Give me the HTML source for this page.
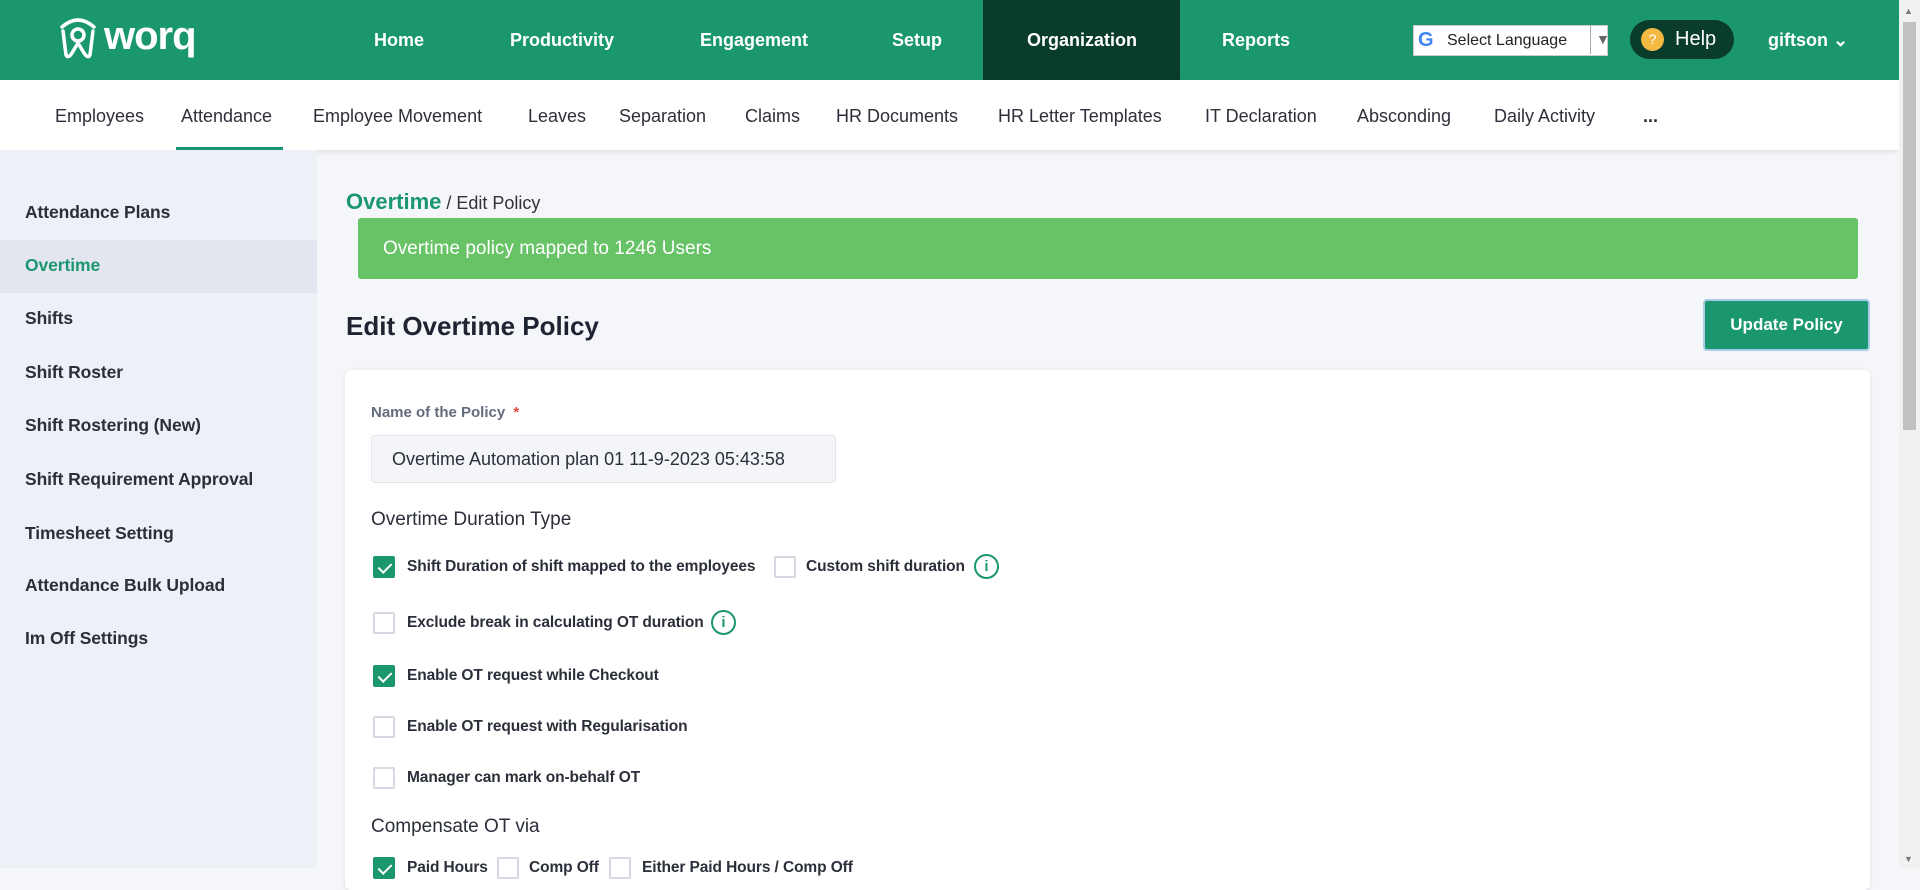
<!DOCTYPE html>
<html><head><meta charset="utf-8">
<style>
*{margin:0;padding:0;box-sizing:border-box}
body{width:1920px;height:868px;overflow:hidden;font-family:"Liberation Sans",sans-serif;background:#f5f6fa;position:relative;color:#2b2f3a}
.top{position:absolute;left:0;top:0;width:1899px;height:80px;background:#1b976f}
.nav{position:absolute;top:0;height:80px;line-height:80px;color:#fff;font-weight:bold;font-size:18px;transform:translateX(-50%);white-space:nowrap}
.org{position:absolute;left:983px;top:0;width:197px;height:80px;background:#0a3c2b}
.lang{position:absolute;left:1413px;top:25px;width:195px;height:31px;background:#fff;border:1px solid #ccc;font-size:16px;color:#222;line-height:29px}
.help{position:absolute;left:1630px;top:20px;width:104px;height:39px;border-radius:20px;background:#0a3c2b;color:#fff;font-size:20px;line-height:39px}
.sub{position:absolute;left:0;top:80px;width:1899px;height:70px;background:#fff;box-shadow:0 2px 5px rgba(0,0,0,.08)}
.si{position:absolute;top:0;line-height:72px;font-size:18px;color:#2d2f3a;white-space:nowrap}
.side{position:absolute;left:0;top:150px;width:317px;height:718px;background:#eef0f7}
.sd{position:absolute;left:25px;font-size:17.5px;font-weight:bold;color:#2b2f3a;letter-spacing:-.1px}
.scroll{position:absolute;right:0;top:0;width:21px;height:868px;background:#f1f1f1}
.card{position:absolute;left:345px;top:370px;width:1525px;height:520px;background:#fff;border-radius:6px;box-shadow:0 1px 4px rgba(0,0,0,.1)}
.cb{position:absolute;width:22px;height:22px;border:2px solid #d6d9e3;border-radius:2px;background:#fff}
.cb.on{background:#1b976f;border-color:#1b976f}
.cb.on:after{content:"";position:absolute;left:6px;top:2px;width:6px;height:11px;border:solid #fff;border-width:0 2px 2px 0;transform:rotate(45deg)}
.lb{position:absolute;font-size:15.5px;font-weight:bold;color:#2b2f3a;letter-spacing:-.1px}
.info{position:absolute;width:25px;height:25px;border:2px solid #1b976f;border-radius:50%;color:#1b976f;font-size:15px;text-align:center;line-height:21px;font-weight:bold}
</style></head><body>
<div class="top">
 <svg style="position:absolute;left:58px;top:15px" width="40" height="46" viewBox="0 0 40 46" fill="none" stroke="#fff" stroke-width="3.5" stroke-linecap="round">
  <path d="M4 12 Q20 -2 36 12"/><path d="M5 16 L8 40 Q10 44 14 38 L20 28 L26 38 Q30 44 32 40 L35 16"/><circle cx="20" cy="20" r="6"/>
 </svg>
 <div style="position:absolute;left:104px;top:14px;color:#fff;font-size:40px;font-weight:bold;letter-spacing:-1px">worq</div>
 <div class="org"></div>
 <div class="nav" style="left:399px">Home</div>
 <div class="nav" style="left:562px">Productivity</div>
 <div class="nav" style="left:754px">Engagement</div>
 <div class="nav" style="left:917px">Setup</div>
 <div class="nav" style="left:1082px">Organization</div>
 <div class="nav" style="left:1256px">Reports</div>
 <div class="lang"><span style="position:absolute;left:4px;top:0;font-weight:bold;font-size:20px;color:#4285f4">G</span><span style="position:absolute;left:33px">Select Language</span><span style="position:absolute;left:176px;top:-1px;border-left:1px solid #aaa;padding-left:5px;color:#666;font-size:14px">▼</span></div>
 <div class="help"><span style="position:absolute;left:11px;top:8px;width:23px;height:23px;border-radius:50%;background:#f4b942;color:#fff;font-size:14px;line-height:23px;text-align:center">?</span><span style="position:absolute;left:45px">Help</span></div>
 <div class="nav" style="left:1808px">giftson ⌄</div>
</div>
<div class="sub">
 <div class="si" style="left:55px">Employees</div>
 <div class="si" style="left:181px">Attendance</div>
 <div class="si" style="left:313px">Employee Movement</div>
 <div class="si" style="left:528px">Leaves</div>
 <div class="si" style="left:619px">Separation</div>
 <div class="si" style="left:745px">Claims</div>
 <div class="si" style="left:836px">HR Documents</div>
 <div class="si" style="left:998px">HR Letter Templates</div>
 <div class="si" style="left:1205px">IT Declaration</div>
 <div class="si" style="left:1357px">Absconding</div>
 <div class="si" style="left:1494px">Daily Activity</div>
 <div class="si" style="left:1643px;font-weight:bold">...</div>
 <div style="position:absolute;left:176px;top:67px;width:107px;height:5px;background:#1b976f"></div>
</div>
<div class="side">
 <div style="position:absolute;left:0;top:90px;width:317px;height:53px;background:#e3e6ef"></div>
 <div class="sd" style="top:52px">Attendance Plans</div>
 <div class="sd" style="top:105px;color:#1b976f">Overtime</div>
 <div class="sd" style="top:158px">Shifts</div>
 <div class="sd" style="top:212px">Shift Roster</div>
 <div class="sd" style="top:265px">Shift Rostering (New)</div>
 <div class="sd" style="top:319px">Shift Requirement Approval</div>
 <div class="sd" style="top:373px">Timesheet Setting</div>
 <div class="sd" style="top:425px">Attendance Bulk Upload</div>
 <div class="sd" style="top:478px">Im Off Settings</div>
</div>
<div style="position:absolute;left:346px;top:189px;white-space:nowrap"><span style="color:#1b976f;font-size:22px;font-weight:bold">Overtime</span><span style="font-size:18px;color:#333"> / Edit Policy</span></div>
<div style="position:absolute;left:358px;top:218px;width:1500px;height:61px;background:#68c266;border-radius:3px;color:#fff;font-size:19px;line-height:61px;padding-left:25px">Overtime policy mapped to 1246 Users</div>
<div style="position:absolute;left:346px;top:311px;font-size:26px;font-weight:bold;color:#1f2433">Edit Overtime Policy</div>
<div style="position:absolute;left:1703px;top:299px;width:167px;height:52px;background:#1b976f;border:2px solid #a9cde8;border-radius:4px;color:#fff;font-size:17px;font-weight:bold;text-align:center;line-height:48px">Update Policy</div>
<div class="card">
 <div style="position:absolute;left:26px;top:34px;font-size:15px;font-weight:bold;color:#646b7d">Name of the Policy <span style="color:#e2463f;margin-left:4px">*</span></div>
 <div style="position:absolute;left:26px;top:65px;width:465px;height:48px;background:#f4f5f9;border:1px solid #e3e5ec;border-radius:4px;font-size:18px;line-height:46px;padding-left:20px;color:#2b2f3a">Overtime Automation plan 01 11-9-2023 05:43:58</div>
 <div style="position:absolute;left:26px;top:139px;font-size:19px;color:#2b2f3a">Overtime Duration Type</div>
 <div class="cb on" style="left:28px;top:186px"></div><div class="lb" style="left:62px;top:188px">Shift Duration of shift mapped to the employees</div>
 <div class="cb" style="left:429px;top:186px"></div><div class="lb" style="left:461px;top:188px">Custom shift duration</div>
 <div class="info" style="left:629px;top:184px">i</div>
 <div class="cb" style="left:28px;top:242px"></div><div class="lb" style="left:62px;top:244px">Exclude break in calculating OT duration</div>
 <div class="info" style="left:366px;top:240px">i</div>
 <div class="cb on" style="left:28px;top:295px"></div><div class="lb" style="left:62px;top:297px">Enable OT request while Checkout</div>
 <div class="cb" style="left:28px;top:346px"></div><div class="lb" style="left:62px;top:348px">Enable OT request with Regularisation</div>
 <div class="cb" style="left:28px;top:397px"></div><div class="lb" style="left:62px;top:399px">Manager can mark on-behalf OT</div>
 <div style="position:absolute;left:26px;top:446px;font-size:19px;color:#2b2f3a">Compensate OT via</div>
 <div class="cb on" style="left:28px;top:487px"></div><div class="lb" style="left:62px;top:489px">Paid Hours</div>
 <div class="cb" style="left:152px;top:487px"></div><div class="lb" style="left:184px;top:489px">Comp Off</div>
 <div class="cb" style="left:264px;top:487px"></div><div class="lb" style="left:297px;top:489px">Either Paid Hours / Comp Off</div>
</div>
<div class="scroll"><div style="position:absolute;left:4px;top:22px;width:13px;height:408px;background:#c1c1c1"></div>
<div style="position:absolute;left:5px;top:6px;font-size:9px;color:#777">▲</div><div style="position:absolute;left:5px;bottom:4px;font-size:9px;color:#777">▼</div></div>
</body></html>
